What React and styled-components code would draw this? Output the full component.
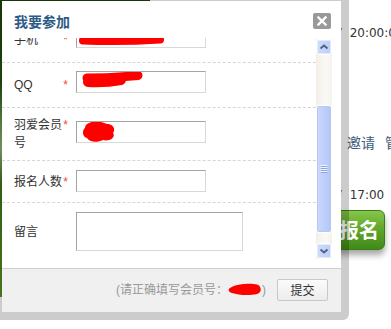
import React, { useLayoutEffect, useRef } from "react";
import styled, { createGlobalStyle, css } from "styled-components";

const Global = createGlobalStyle`
  html, body { margin: 0; padding: 0; width: 391px; height: 329px; overflow: hidden; background: #fff; }
  body { font-family: "Liberation Sans", "Noto Sans CJK SC", sans-serif; }
  * { box-sizing: border-box; }
`;

const Page = styled.div`
  position: relative;
  width: 391px;
  height: 329px;
  overflow: hidden;
  background: #fff;
  display: flex;
`;

const Banner = styled.div`
  width: 150px;
  height: 297px;
  background: linear-gradient(
    to bottom,
    #1c450c 0%,
    #24540f 28%,
    #6f9a55 42%,
    #8fb07a 50%,
    #3d7619 62%,
    #5a9226 100%
  );
`;

const Side = styled.div`
  margin-left: auto;
  width: 91px;
  display: flex;
  flex-direction: column;
  padding-top: 26px;
  white-space: nowrap;
`;

const Time = styled.div`
  font-family: "DejaVu Sans", sans-serif;
  font-size: 12px;
  line-height: 14px;
  color: #333;
  padding-left: 35px;
  margin-top: ${(p) => p.$top || 0}px;
  display: flex;
`;

const Hidden7 = styled.span`
  margin-right: 7px;
`;

const Invite = styled.div`
  margin-top: 94px;
  padding-left: 47px;
  font-family: "Noto Sans CJK SC", sans-serif;
  font-size: 14px;
  line-height: 16px;
  color: #3b5a79;
  display: flex;
  gap: 10px;
`;

const JoinButton = styled.div`
  margin-top: 8px;
  width: 85px;
  height: 40px;
  border-radius: 6px;
  border: 1px solid #3c7d16;
  background: linear-gradient(to bottom, #86c64a 0%, #62a82c 45%, #3f8a18 100%);
  box-shadow: 0 5px 6px rgba(0, 0, 0, 0.35);
  color: #fff;
  font-family: "Noto Sans CJK SC", sans-serif;
  font-weight: 700;
  font-size: 20px;
  line-height: 38px;
  text-align: right;
  padding-right: 5px;
`;

const Dialog = styled.div`
  position: absolute;
  left: -6px;
  top: -7px;
  width: 355px;
  height: 327px;
  border: 8px solid rgba(0, 0, 0, 0.2);
  border-radius: 6px;
  background: #fff;
  background-clip: padding-box;
  display: flex;
  flex-direction: column;
`;

const TitleBar = styled.div`
  height: 37px;
  flex: none;
  display: flex;
  align-items: center;
  justify-content: space-between;
  padding: 2px 10px 0 12px;
`;

const Title = styled.div`
  font-family: "Noto Sans CJK SC", sans-serif;
  font-weight: 700;
  font-size: 14px;
  color: #2d5b85;
  line-height: 18px;
`;

const Close = styled.div`
  width: 18px;
  height: 16px;
  border-radius: 2px;
  background: #999;
  display: flex;
  align-items: center;
  justify-content: center;
`;

const Body = styled.div`
  display: flex;
  height: 221px;
  flex: none;
`;

const Viewport = styled.div`
  flex: 1;
  height: 221px;
  overflow: hidden;
`;

const Content = styled.div`
  padding-top: 10px;
  padding-bottom: 20px;
`;

const Row = styled.div`
  display: grid;
  grid-template-columns: 62px 1fr;
  align-items: center;
  padding-left: 12px;
  border-bottom: 1px dashed #d6d6d6;
  ${(p) =>
    p.$h
      ? css`
          height: ${p.$h}px;
        `
      : css`
          padding-top: 9px;
          padding-bottom: 9px;
        `}
`;

const Label = styled.div`
  width: 54px;
  font-size: 12px;
  line-height: 18px;
  color: #333;
`;

const Star = styled.span`
  float: right;
  color: #ef4d22;
  font-size: 12px;
  line-height: 18px;
`;

const fieldLook = css`
  border: 1px solid;
  border-color: #a3a3a3 #d8d8d8 #d8d8d8 #a3a3a3;
  background: #fff;
`;

const Input = styled.input`
  ${fieldLook};
  display: block;
  width: 130px;
  height: 22px;
  margin: 0 0 ${(p) => p.$raise || 0}px;
  padding: 0 4px;
  font: 12px "Liberation Sans", "Noto Sans CJK SC", sans-serif;
  outline: none;
`;

const FieldBox = styled.div`
  ${fieldLook};
  width: 130px;
  height: 22px;
  margin-bottom: ${(p) => p.$raise || 0}px;
  overflow: hidden;
  svg {
    display: block;
  }
`;

const TextArea = styled.textarea`
  ${fieldLook};
  display: block;
  width: 167px;
  height: 39px;
  margin: 0;
  padding: 2px 4px;
  resize: none;
  outline: none;
  font: 12px "Liberation Sans", "Noto Sans CJK SC", sans-serif;
`;

const ScrollBar = styled.div`
  width: 16px;
  margin: 1px 9px 0 0;
  display: flex;
  flex-direction: column;
  background: linear-gradient(to right, #f1efe7, #fbfaf6 60%, #f3f2ec);
`;

const ArrowBtn = styled.div`
  width: 16px;
  height: 16px;
  flex: none;
  border: 1px solid #fff;
  border-radius: 3px;
  background: linear-gradient(to right, #cfdcfc, #bccdf6);
  box-shadow: 0 0 0 1px #e4ebfb inset;
  display: flex;
  align-items: center;
  justify-content: center;
`;

const Track = styled.div`
  flex: 1;
  padding-top: 50px;
`;

const Thumb = styled.div`
  height: 128px;
  border: 1px solid #fff;
  border-radius: 3px;
  background: linear-gradient(to right, #cad8fd, #bccdf9 60%, #b3c6f4);
  box-shadow: 0 0 0 1px #b7c8f1 inset;
  display: flex;
  align-items: center;
  justify-content: center;
`;

const Footer = styled.div`
  margin-top: auto;
  height: 44px;
  flex: none;
  border-top: 1px solid #cfcfcf;
  background: #f0f0f0;
  display: flex;
  align-items: center;
  justify-content: flex-end;
  gap: 11px;
  padding: 0 13px 2px 0;
`;

const Hint = styled.div`
  font-size: 12px;
  line-height: 16px;
  color: #999;
  display: flex;
  align-items: center;
  svg {
    display: block;
  }
`;

const Submit = styled.button`
  width: 51px;
  height: 22px;
  padding: 0;
  border: 1px solid #c8c8c8;
  border-radius: 2px;
  background: linear-gradient(to bottom, #fbfbfb, #ececec);
  font: 12px "Noto Sans CJK SC", sans-serif;
  color: #333;
`;

const Red = "#ff0000";

function PhoneScribble() {
  return (
    <svg width="128" height="20" viewBox="0 0 128 20">
      <path d="M6 13.5 Q45 15 83 12.5" stroke={Red} strokeWidth="8" strokeLinecap="round" fill="none" />
    </svg>
  );
}

function QQScribble() {
  return (
    <svg width="128" height="20" viewBox="0 0 128 20">
      <path d="M10 6 Q35 6 61 3.5" stroke={Red} strokeWidth="9" strokeLinecap="round" fill="none" />
      <path d="M11 10 Q28 11 44 8" stroke={Red} strokeWidth="10" strokeLinecap="round" fill="none" />
    </svg>
  );
}

function MemberScribble() {
  return (
    <svg width="128" height="20" viewBox="0 0 128 20">
      <path
        d="M12 1 C18 -2 26 0 30 2 C36 2 39 7 36 11 C39 15 33 20 26 18 C20 21 12 20 10 16 C5 15 5 8 8 6 C8 3 10 2 12 1 Z"
        fill={Red}
      />
    </svg>
  );
}

function FooterScribble() {
  return (
    <svg width="34" height="13" viewBox="0 0 34 13">
      <path d="M2 5 C8 1 22 0 29 1.5 C34 3 34 10 29 11 C21 13 10 12 4 10 C0 9 0 6 2 5 Z" fill={Red} />
    </svg>
  );
}

function Chevron({ down }) {
  return (
    <svg width="10" height="8" viewBox="0 0 10 8">
      <polyline
        points={down ? "1.5,2.5 5,5.5 8.5,2.5" : "1.5,5.5 5,2.5 8.5,5.5"}
        fill="none"
        stroke="#4d6185"
        strokeWidth="1.8"
      />
    </svg>
  );
}

function Grip() {
  return (
    <svg width="8" height="8" viewBox="0 0 8 8">
      {[0, 2, 4, 6].map((y) => (
        <g key={y}>
          <line x1="0.5" y1={y + 0.5} x2="7.5" y2={y + 0.5} stroke="#eef3fe" />
          <line x1="1" y1={y + 1.5} x2="7.5" y2={y + 1.5} stroke="#8da7e2" />
        </g>
      ))}
    </svg>
  );
}

function CloseIcon() {
  return (
    <svg width="10" height="10" viewBox="0 0 10 10">
      <path d="M1.5 1.5 L8.5 8.5 M8.5 1.5 L1.5 8.5" stroke="#fff" strokeWidth="2.4" strokeLinecap="square" />
    </svg>
  );
}

function Field({ label, h, children }) {
  return (
    <Row $h={h}>
      <Label>
        <Star>*</Star>
        {label}
      </Label>
      {children}
    </Row>
  );
}

export default function App() {
  const vp = useRef(null);
  useLayoutEffect(() => {
    if (vp.current) vp.current.scrollTop = 75;
  }, []);

  return (
    <>
      <Global />
      <Page>
        <Banner />
        <Side>
          <Time>
            <Hidden7>7</Hidden7>20:00:00
          </Time>
          <Invite>
            <span>邀请</span>
            <span>管理</span>
          </Invite>
          <Time $top={38}>
            <Hidden7>7</Hidden7>17:00
          </Time>
          <JoinButton>报名</JoinButton>
        </Side>

        <Dialog>
          <TitleBar>
            <Title>我要参加</Title>
            <Close>
              <CloseIcon />
            </Close>
          </TitleBar>

          <Body>
            <Viewport ref={vp}>
              <Content>
                <Field label="姓名" h={45}>
                  <Input $raise={6} readOnly />
                </Field>
                <Field label="手机" h={45}>
                  <FieldBox $raise={6}>
                    <PhoneScribble />
                  </FieldBox>
                </Field>
                <Field label="QQ" h={45}>
                  <FieldBox $raise={6}>
                    <QQScribble />
                  </FieldBox>
                </Field>
                <Field label="羽爱会员号" h={53}>
                  <FieldBox $raise={5}>
                    <MemberScribble />
                  </FieldBox>
                </Field>
                <Field label="报名人数" h={42}>
                  <Input $raise={2} readOnly />
                </Field>
                <Row>
                  <Label>留言</Label>
                  <TextArea readOnly />
                </Row>
              </Content>
            </Viewport>
            <ScrollBar>
              <ArrowBtn>
                <Chevron />
              </ArrowBtn>
              <Track>
                <Thumb>
                  <Grip />
                </Thumb>
              </Track>
              <ArrowBtn>
                <Chevron down />
              </ArrowBtn>
            </ScrollBar>
          </Body>

          <Footer>
            <Hint>
              (请正确填写会员号：
              <FooterScribble />)
            </Hint>
            <Submit>提交</Submit>
          </Footer>
        </Dialog>
      </Page>
    </>
  );
}
